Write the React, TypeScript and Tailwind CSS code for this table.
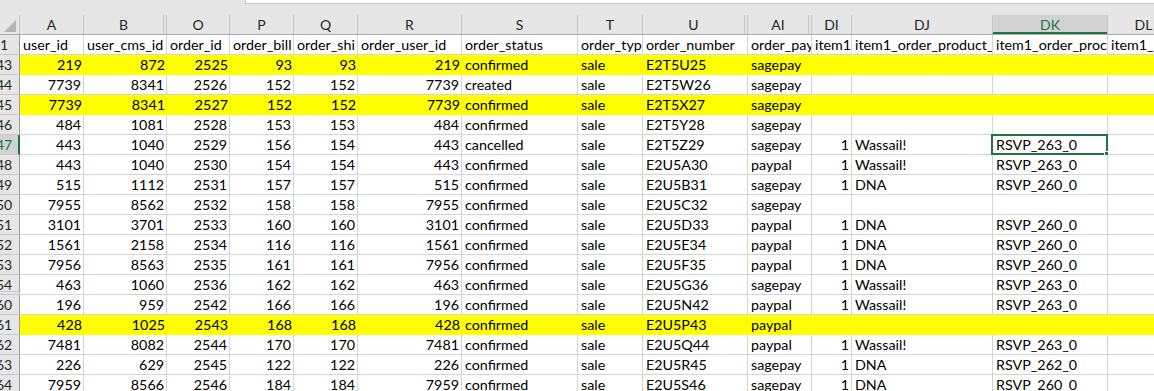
import React from 'react';

type Col = { key: string; w: number; head: string; num?: boolean; hidden?: boolean };

// header labels are cut where the neighbouring cell starts, as in the sheet
const cols: Col[] = [
  { key: 'A', w: 64, head: 'user_id', num: true },
  { key: 'B', w: 83, head: 'user_cms_id', num: true, hidden: true },
  { key: 'O', w: 63, head: 'order_id', num: true },
  { key: 'P', w: 64, head: 'order_bill', num: true },
  { key: 'Q', w: 64, head: 'order_shi', num: true },
  { key: 'R', w: 104, head: 'order_user_id', num: true },
  { key: 'S', w: 116, head: 'order_status' },
  { key: 'T', w: 65, head: 'order_typ' },
  { key: 'U', w: 105, head: 'order_number', hidden: true },
  { key: 'AI', w: 64, head: 'order_pay', hidden: true },
  { key: 'DI', w: 40, head: 'item1', num: true },
  { key: 'DJ', w: 141, head: 'item1_order_product_' },
  { key: 'DK', w: 115, head: 'item1_order_proc' },
  { key: 'DL', w: 72, head: 'item1_' },
];

type Row = { n: number; yellow?: boolean; v: (string | number)[] };

const rows: Row[] = [
  { n: 43, yellow: true, v: [219, 872, 2525, 93, 93, 219, 'confirmed', 'sale', 'E2T5U25', 'sagepay', '', '', '', ''] },
  { n: 44, v: [7739, 8341, 2526, 152, 152, 7739, 'created', 'sale', 'E2T5W26', 'sagepay', '', '', '', ''] },
  { n: 45, yellow: true, v: [7739, 8341, 2527, 152, 152, 7739, 'confirmed', 'sale', 'E2T5X27', 'sagepay', '', '', '', ''] },
  { n: 46, v: [484, 1081, 2528, 153, 153, 484, 'confirmed', 'sale', 'E2T5Y28', 'sagepay', '', '', '', ''] },
  { n: 47, v: [443, 1040, 2529, 156, 154, 443, 'cancelled', 'sale', 'E2T5Z29', 'sagepay', 1, 'Wassail!', 'RSVP_263_0', ''] },
  { n: 48, v: [443, 1040, 2530, 154, 154, 443, 'confirmed', 'sale', 'E2U5A30', 'paypal', 1, 'Wassail!', 'RSVP_263_0', ''] },
  { n: 49, v: [515, 1112, 2531, 157, 157, 515, 'confirmed', 'sale', 'E2U5B31', 'sagepay', 1, 'DNA', 'RSVP_260_0', ''] },
  { n: 50, v: [7955, 8562, 2532, 158, 158, 7955, 'confirmed', 'sale', 'E2U5C32', 'sagepay', '', '', '', ''] },
  { n: 51, v: [3101, 3701, 2533, 160, 160, 3101, 'confirmed', 'sale', 'E2U5D33', 'paypal', 1, 'DNA', 'RSVP_260_0', ''] },
  { n: 52, v: [1561, 2158, 2534, 116, 116, 1561, 'confirmed', 'sale', 'E2U5E34', 'paypal', 1, 'DNA', 'RSVP_260_0', ''] },
  { n: 53, v: [7956, 8563, 2535, 161, 161, 7956, 'confirmed', 'sale', 'E2U5F35', 'paypal', 1, 'DNA', 'RSVP_260_0', ''] },
  { n: 54, v: [463, 1060, 2536, 162, 162, 463, 'confirmed', 'sale', 'E2U5G36', 'sagepay', 1, 'Wassail!', 'RSVP_263_0', ''] },
  { n: 60, v: [196, 959, 2542, 166, 166, 196, 'confirmed', 'sale', 'E2U5N42', 'paypal', 1, 'Wassail!', 'RSVP_263_0', ''] },
  { n: 61, yellow: true, v: [428, 1025, 2543, 168, 168, 428, 'confirmed', 'sale', 'E2U5P43', 'paypal', '', '', '', ''] },
  { n: 62, v: [7481, 8082, 2544, 170, 170, 7481, 'confirmed', 'sale', 'E2U5Q44', 'paypal', 1, 'Wassail!', 'RSVP_263_0', ''] },
  { n: 63, v: [226, 629, 2545, 122, 122, 226, 'confirmed', 'sale', 'E2U5R45', 'sagepay', 1, 'DNA', 'RSVP_262_0', ''] },
  { n: 64, v: [7959, 8566, 2546, 184, 184, 7959, 'confirmed', 'sale', 'E2U5S46', 'sagepay', 1, 'DNA', 'RSVP_260_0', ''] },
];

const SEL_ROW = 47;
const SEL_COL = 'DK';

function RowHead({ n, sel, gapBelow }: { n: number | string; sel?: boolean; gapBelow?: boolean }) {
  return (
    <div
      className={`w-[20px] shrink-0 overflow-hidden flex items-start ${
        gapBelow ? 'h-[20px] border-b-[4px] border-double' : 'h-[20px] border-b'
      } border-[#c8c8c8] ${
        sel
          ? 'bg-[#d2d2d2] text-[#217346] border-r-2 border-r-[#217346]'
          : 'bg-[#e6e6e6] text-[#262626] border-r border-r-[#9b9b9b]'
      }`}
    >
      <div className="w-[30px] ml-[-11px] shrink-0 text-center text-[14px] leading-[19px]">{n}</div>
    </div>
  );
}

function ColHeaders() {
  return (
    <div className="flex h-[20px] border-b border-[#ababab] bg-[#e6e6e6]">
      <div className="w-[20px] h-[19px] shrink-0 border-r border-[#c6c6c6] flex items-end justify-end pr-[3px] pb-[2px]">
        <svg width="12" height="12" viewBox="0 0 12 12">
          <polygon points="12,0 12,12 0,12" fill="#b4b4b4" />
        </svg>
      </div>
      {cols.map((c) => {
        const sel = c.key === SEL_COL;
        return (
          <div
            key={c.key}
            style={{ width: c.w }}
            className={`shrink-0 h-[19px] text-center text-[14px] leading-[19px] ${
              c.hidden ? 'border-r-[4px] border-double' : 'border-r'
            } border-[#c6c6c6] ${
              sel ? 'bg-[#d2d2d2] text-[#217346] shadow-[inset_0_-2px_0_#217346]' : 'text-[#262626]'
            }`}
          >
            {c.key}
          </div>
        );
      })}
    </div>
  );
}

function Cell({ col, value, yellow, header, selected }: { col: Col; value: string | number; yellow?: boolean; header?: boolean; selected?: boolean }) {
  const right = !header && col.num;
  return (
    <div
      style={{ width: col.w }}
      className={`relative shrink-0 h-[20px] whitespace-nowrap text-[14.3px] leading-[19px] text-black ${
        yellow ? 'bg-[#ffff00]' : 'bg-white border-r border-b border-[#d4d4d4]'
      } ${right ? 'text-right pr-[2px]' : 'text-left pl-[3px]'}`}
    >
      <div className="overflow-hidden h-full">{value}</div>
      {selected && (
        <>
          <div className="absolute left-[-2px] top-[-1px] right-[-1px] bottom-[-1px] border-2 border-[#217346]" />
          <div className="absolute right-[-4px] bottom-[-4px] w-[7px] h-[7px] bg-[#217346] border border-white" />
        </>
      )}
    </div>
  );
}

export default function App() {
  return (
    <div className="w-[1154px] h-[391px] overflow-hidden bg-white font-[Lato,sans-serif] select-none">
      <div className="flex h-[15px] bg-[#e6e6e6]">
        <div className="w-[245px] shrink-0" />
        <div className="flex-1 h-[4px] bg-white border-l border-b border-[#c6c6c6]" />
      </div>
      <ColHeaders />
      <div className="flex">
        <RowHead n={1} />
        {cols.map((c) => (
          <Cell key={c.key} col={c} value={c.head} header />
        ))}
      </div>
      {rows.map((r) => (
        <div key={r.n} className="flex">
          <RowHead n={r.n} sel={r.n === SEL_ROW} gapBelow={r.n === 54} />
          {cols.map((c, i) => (
            <Cell
              key={c.key}
              col={c}
              value={r.v[i]}
              yellow={r.yellow}
              selected={r.n === SEL_ROW && c.key === SEL_COL}
            />
          ))}
        </div>
      ))}
    </div>
  );
}
